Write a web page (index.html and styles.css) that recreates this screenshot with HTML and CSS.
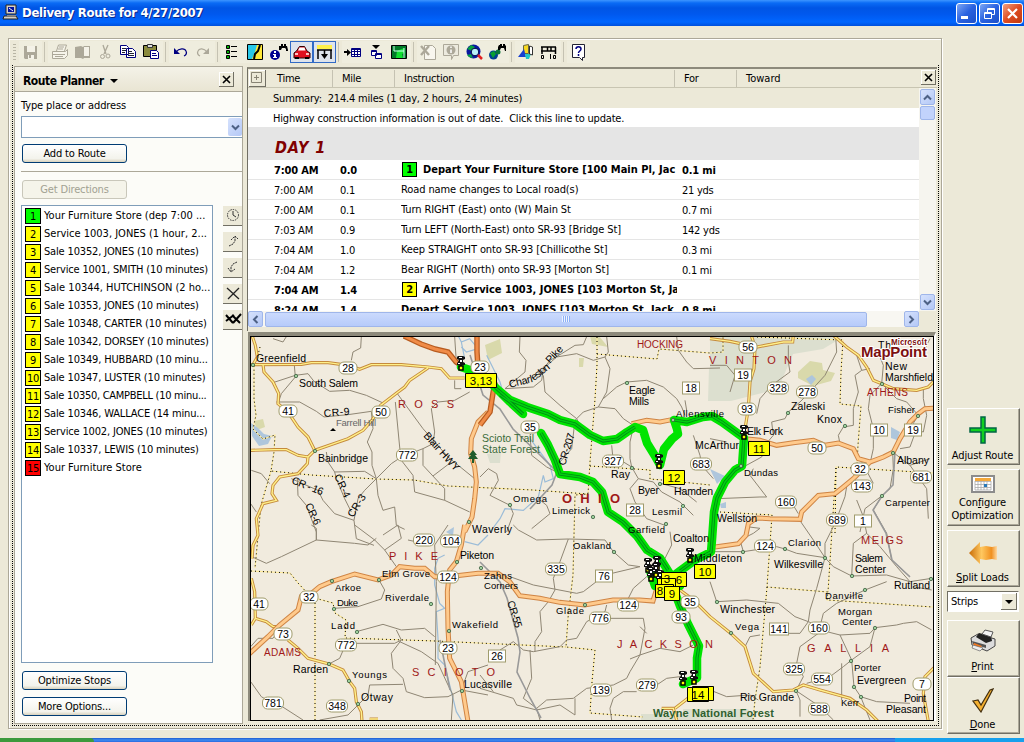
FILE: index.html
```html
<!DOCTYPE html>
<html lang="en">
<head>
<meta charset="utf-8">
<title>Delivery Route for 4/27/2007</title>
<link rel="stylesheet" href="styles.css">
</head>
<body>
<header class="titlebar">
  <svg class="app-icon" viewBox="0 0 17 17"><path fill="#d4d0c8" stroke="#222" d="M4 1h10v9H4zM2 12h12l2 3H1z"/><path fill="#0010a0" d="M6 3h6v5H6z"/><path stroke="#fff" d="M7 4l4 3"/><path fill="#888" d="M5 11h9v1H5z"/></svg>
  <h1>Delivery Route for 4/27/2007</h1>
  <div class="win-buttons">
    <span class="wb"><svg viewBox="0 0 19 19"><path fill="#fff" d="M4 12h7v3H4z"/></svg></span>
    <span class="wb"><svg viewBox="0 0 19 19"><path fill="none" stroke="#fff" d="M7.500 8V4.500h7v6H12M7 5.500h8M4.500 8.500h7v6h-7zM4 9.500h8"/></svg></span>
    <span class="wb close"><svg viewBox="0 0 19 19"><path stroke="#fff" stroke-width="2.200" d="M5 5l9 9M14 5l-9 9"/></svg></span>
  </div>
</header>

<div class="workspace">
<main class="frame">
  <div class="toolbar">
    <i class="grip"></i>
    <span class="tb"><svg viewBox="0 0 23 22"><path fill="#aca899" d="M5 5h13v13H6l-1-1z"/><path fill="#f4f2e8" d="M8 5h8v6H8zM9 14h6v4H9z"/><path fill="#aca899" d="M10 14h2v3h-2z"/></svg></span>
    <i class="sep"></i>
    <span class="tb"><svg viewBox="0 0 23 22"><path fill="#f6f4ea" stroke="#aca899" d="M8.500 10l2-6h8l-2 6M4.500 10.500h13l2-2v6l-3 3h-12z"/><path stroke="#aca899" d="M11 6h5M10 8h5M5 13.500h12M7 15.500h8"/></svg></span>
    <span class="tb"><svg viewBox="0 0 23 22"><path fill="#aca899" d="M4 6l6-1 2 1 1-1h6v12h-6l-1 1-2-1H4z"/><path fill="#f4f2e8" d="M13 6h5v9h-5z"/><path stroke="#aca899" d="M12 6v11"/></svg></span>
    <span class="tb"><svg viewBox="0 0 23 22"><path fill="none" stroke="#aca899" stroke-width="1.300" d="M9 4l3 9M14 4l-4 9"/><circle cx="8.500" cy="15.500" r="2" fill="none" stroke="#aca899"/><circle cx="14" cy="15" r="2" fill="none" stroke="#aca899"/></svg></span>
    <span class="tb"><svg viewBox="0 0 23 22"><path fill="#fff" stroke="#000080" d="M3.500 4.500h6l2 2v7h-8zM9.500 7.500h6l3 3v6h-9z"/><path stroke="#223" d="M5 7.500h4M5 9.500h4M5 11.500h3M11 10.500h4M11 12.500h6M11 14.500h6"/></svg></span>
    <span class="tb"><svg viewBox="0 0 23 22"><path fill="#8a8a3c" stroke="#000" d="M3.500 4.500h13v11h-13z"/><path fill="#ddd" stroke="#333" d="M7.500 3.500h5v3h-5z"/><path fill="#fff" stroke="#000080" d="M10.500 9.500h6l2 2v6h-8z"/><path stroke="#000080" d="M12 12.500h4M12 14.500h5"/></svg></span>
    <i class="sep"></i>
    <span class="tb"><svg viewBox="0 0 23 22"><path fill="none" stroke="#000080" stroke-width="1.200" d="M7 11c3-4 9-4 10-1 1 2 0 4-2 5"/><path fill="#000080" d="M5 7v6h6z"/></svg></span>
    <span class="tb"><svg viewBox="0 0 23 22"><path fill="none" stroke="#aca899" stroke-width="1.200" d="M15 11c-3-4-8-4-9-1-1 2 0 4 2 5"/><path fill="#aca899" d="M17 7v6h-6z"/></svg></span>
    <i class="sep"></i>
    <span class="tb"><svg viewBox="0 0 23 22"><path fill="#00b000" stroke="#000" d="M5.500 4.500h3v3h-3zM5.500 9.500h3v3h-3zM5.500 14.500h3v3h-3z"/><path stroke="#000" d="M10 5.500h6M10 10.500h6M10 15.500h6"/></svg></span>
    <span class="tb"><svg viewBox="0 0 23 22"><path fill="#ffe838" stroke="#000" d="M3.500 3.500h15v15h-15z"/><path fill="#28c8e8" d="M4 4h9l-2 7-3 7H4z"/><path fill="none" stroke="#000" stroke-width="2" d="M16 4l-2 6-3 3-1 5"/></svg></span>
    <span class="tb"><svg viewBox="0 0 23 22"><circle cx="8" cy="14" r="5" fill="#000090"/><path fill="#fff" d="M7 10h2v2H7zM6 13h3v3h1v1H6v-1h1v-2H6z"/><path fill="#000" d="M12 5h2V3h2v2h1V3h2v2h1l1 4v1h-2V8l-1-1h-3l-1 2h-2z"/></svg></span>
    <span class="tb on"><svg viewBox="0 0 23 22"><path fill="#e01020" stroke="#300" d="M6.500 10l3-4.500h5L17 10l3 2v5H4v-5z"/><path fill="#fff" d="M9.500 6.500h5l1 3H8z"/><path fill="#ffc0c0" d="M5 12h3v2H5zM16 12h3v2h-3z"/><path fill="#000" d="M5 16h4v2H5zM15 16h4v2h-4z"/></svg></span>
    <span class="tb on"><svg viewBox="0 0 23 22"><path fill="#fff04a" d="M4 4h15v4H4z"/><path fill="none" stroke="#000" stroke-width="1.500" d="M4 9h15M5 9v9M18 9v9M11.500 9v7"/><path fill="#000" d="M8 13h7l-3.500 5z"/></svg></span>
    <i class="sep"></i>
    <span class="tb"><svg viewBox="0 0 23 22"><path fill="#000" d="M2 10h3V8l4 3.500L5 15v-3H2z"/><path fill="#fff" stroke="#000080" d="M9.500 7.500h9v8h-9zM9 8.500h10M9 10.500h10M9 13.500h10M12.500 8v7M15.500 8v7"/></svg></span>
    <span class="tb"><svg viewBox="0 0 23 22"><path fill="#000" d="M7 4h8l-4 4z"/><path fill="#fff" stroke="#000080" d="M6.500 9.500h5v5h-5zM10.500 12.500h6v5h-6z"/><path stroke="#000080" d="M6 10.500h6M10 13.500h7"/></svg></span>
    <span class="tb"><svg viewBox="0 0 23 22"><path fill="#007a28" stroke="#000" d="M3.500 4.500h15v13h-15z"/><path fill="#10e030" d="M9 10l7-3v5l-2 1 1 4H8z"/><path fill="none" stroke="#cfe" d="M6 5v5l10 0M16 7v10"/></svg></span>
    <i class="sep"></i>
    <span class="tb"><svg viewBox="0 0 23 22"><path fill="#f8f6ee" stroke="#aca899" d="M7.500 4.500h8l3 3v11h-11z"/><path stroke="#aca899" stroke-width="2.400" d="M4 5l8 9M12 5l-8 9"/></svg></span>
    <span class="tb"><svg viewBox="0 0 23 22"><path fill="#eceade" stroke="#aca899" d="M3.500 3.500h15v11h-5l-2 4v-4h-8z"/><circle cx="11" cy="9" r="4.500" fill="#aca899"/><path stroke="#fff" stroke-width="1.500" d="M11 5.500V7M11 8.500V12"/></svg></span>
    <span class="tb"><svg viewBox="0 0 23 22"><circle cx="10.500" cy="10.500" r="7" fill="#0818a0"/><path fill="#08a040" d="M4 8l4-4 4 2-3 4zM4 14l4-1 2 4-4-1z"/><circle cx="12" cy="11" r="3.800" fill="#b8f0f8" stroke="#004"/><path stroke="#e02020" stroke-width="2.500" d="M15 14l4 4"/></svg></span>
    <span class="tb"><svg viewBox="0 0 23 22"><circle cx="7.500" cy="14" r="4.500" fill="#004090"/><path fill="#08a030" d="M4 12l4-2 2 3-3 4z"/><circle cx="12" cy="11" r="2.500" fill="#087838"/><path fill="#000" d="M12 6l1-2h1V3h2v2h1V3h2v1l1 1v5h-1l-1-3h-3l-1 2h-2z"/></svg></span>
    <i class="sep"></i>
    <span class="tb"><svg viewBox="0 0 23 22"><path fill="#f8d820" stroke="#664" d="M8.500 4.500l5-1v9h-5z"/><path fill="#1840d0" d="M3 16l6-8 2 8z"/><path fill="#20c8c8" d="M10 13h6l-2 5h-3z"/><path fill="#fff" stroke="#333" d="M14.500 5l3 1v8l-3-1z"/></svg></span>
    <span class="tb"><svg viewBox="0 0 23 22"><path fill="none" stroke="#000" stroke-width="1.500" d="M3 6h15M3 10h15M4 6v7M9.500 6v4M13 6v4M17.500 6v7"/><path fill="none" stroke="#000" d="M3.500 14.500h2v3h-2zM15.500 14.500h2v3h-2zM12.500 13v5"/></svg></span>
    <i class="sep"></i>
    <span class="tb"><svg viewBox="0 0 23 22"><path fill="#fff" stroke="#223" d="M5.500 3.500h12v13h-2v3l-3-3h-7z"/><path fill="none" stroke="#000080" stroke-width="1.500" d="M9 8c0-3 5-3 5 0 0 2-2.500 2-2.500 4M11.500 13v2"/></svg></span>
  </div>

  <div class="panes">
    <aside class="planner">
      <div class="planner-head"><strong>Route Planner</strong><i class="caret"></i><span class="xbtn"><svg viewBox="0 0 9 9"><path d="M1 1l7 7M8 1L1 8"/></svg></span></div>
      <div class="planner-body">
        <label class="place-label">Type place or address</label>
        <div class="combo"><span class="drop"><svg viewBox="0 0 9 7"><path d="M1 1.500l3.500 3.500L8 1.500"/></svg></span></div>
        <button class="btn">Add to Route</button>
        <hr class="rule">
        <button class="btn off">Get Directions</button>
        <div class="stops-row">
          <ol class="stops">
            <li class="wide"><b class="num go">1</b>Your Furniture Store (dep 7:00 ...</li>
            <li class="wide"><b class="num">2</b>Service 1003, JONES (1 hour, 2...</li>
            <li><b class="num">3</b>Sale 10352, JONES (10 minutes)</li>
            <li><b class="num">4</b>Service 1001, SMITH (10 minutes)</li>
            <li class="wide"><b class="num">5</b>Sale 10344, HUTCHINSON (2 ho...</li>
            <li><b class="num">6</b>Sale 10353, JONES (10 minutes)</li>
            <li><b class="num">7</b>Sale 10348, CARTER (10 minutes)</li>
            <li><b class="num">8</b>Sale 10342, DORSEY (10 minutes)</li>
            <li><b class="num">9</b>Sale 10349, HUBBARD (10 minu...</li>
            <li><b class="num">10</b>Sale 10347, LUSTER (10 minutes)</li>
            <li class="tight"><b class="num">11</b>Sale 10350, CAMPBELL (10 minu...</li>
            <li><b class="num">12</b>Sale 10346, WALLACE (14 minu...</li>
            <li><b class="num">13</b>Service 1002, JONES (10 minutes)</li>
            <li><b class="num">14</b>Sale 10337, LEWIS (10 minutes)</li>
            <li class="wide"><b class="num end">15</b>Your Furniture Store</li>
          </ol>
          <div class="stop-tools">
            <span><svg viewBox="0 0 18 18"><circle cx="9" cy="9" r="5.500" fill="none" stroke="#333" stroke-dasharray="1.500 1"/><path stroke="#333" d="M9 5v4l3 2" fill="none"/></svg></span>
            <span><svg viewBox="0 0 18 18"><path fill="none" stroke="#333" stroke-dasharray="2 .7" d="M5 14l4-2 2-3V5M7 8l4-4 3 3"/></svg></span>
            <span><svg viewBox="0 0 18 18"><path fill="none" stroke="#333" stroke-dasharray="2 .7" d="M13 4l-4 2-2 3v4M4 10l3 4 4-3"/></svg></span>
            <span><svg viewBox="0 0 18 18"><path stroke="#222" stroke-width="1.300" d="M3 4l12 11M15 4L4 15"/></svg></span>
            <span><svg viewBox="0 0 18 18"><path stroke="#000" stroke-width="2" d="M2 5l7 8M10 5l-8 6M8 5l8 8M17 4l-8 9"/></svg></span>
          </div>
        </div>
        <button class="btn low">Optimize Stops</button>
        <button class="btn last">More Options...</button>
      </div>
    </aside>

    <section class="right">
      <div class="directions">
        <div class="dir-head">
          <span class="plus"><svg viewBox="0 0 11 11"><path fill="none" stroke="#888475" d="M.5.500h10v10H.5zM3 5.500h5M5.500 3v5"/></svg></span>
          <span class="h-time">Time</span><span class="h-mile">Mile</span><span class="h-ins">Instruction</span><span class="h-for">For</span><span class="h-tow">Toward</span>
          <span class="xbtn"><svg viewBox="0 0 9 9"><path d="M1 1l7 7M8 1L1 8"/></svg></span>
        </div>
        <div class="dir-main">
          <div class="dir-list">
            <p class="note sum">Summary:&nbsp; 214.4 miles (1 day, 2 hours, 24 minutes)</p>
            <p class="note">Highway construction information is out of date.&nbsp; Click this line to update.</p>
            <h2 class="day">DAY 1</h2>
            <div class="row stop"><span>7:00 AM</span><span>0.0</span><span class="ins"><b class="num go">1</b>Depart Your Furniture Store [100 Main Pl, Jac</span><span>0.1 mi</span></div>
            <div class="row"><span>7:00 AM</span><span>0.1</span><span class="ins">Road name changes to Local road(s)</span><span>21 yds</span></div>
            <div class="row"><span>7:00 AM</span><span>0.1</span><span class="ins">Turn RIGHT (East) onto (W) Main St</span><span>0.7 mi</span></div>
            <div class="row"><span>7:03 AM</span><span>0.9</span><span class="ins">Turn LEFT (North-East) onto SR-93 [Bridge St]</span><span>142 yds</span></div>
            <div class="row"><span>7:04 AM</span><span>1.0</span><span class="ins">Keep STRAIGHT onto SR-93 [Chillicothe St]</span><span>0.3 mi</span></div>
            <div class="row"><span>7:04 AM</span><span>1.2</span><span class="ins">Bear RIGHT (North) onto SR-93 [Morton St]</span><span>0.1 mi</span></div>
            <div class="row stop"><span>7:04 AM</span><span>1.4</span><span class="ins"><b class="num">2</b>Arrive Service 1003, JONES [103 Morton St, Ja</span><span></span></div>
            <div class="row stop"><span>8:24 AM</span><span>1.4</span><span class="ins">Depart Service 1003, JONES [103 Morton St, Jack</span><span>0.8 mi</span></div>
          </div>
          <div class="vscroll"><span class="sb"><svg viewBox="0 0 9 7"><path d="M1 5.500L4.500 2 8 5.500"/></svg></span><i class="vthumb"></i><span class="sb down"><svg viewBox="0 0 9 7"><path d="M1 1.500L4.500 5 8 1.500"/></svg></span></div>
        </div>
        <div class="hscroll"><span class="sb"><svg viewBox="0 0 7 9"><path d="M5.500 1L2 4.500 5.500 8"/></svg></span><i class="hthumb"><i class="ridges"></i></i><span class="sb hend"><svg viewBox="0 0 7 9"><path d="M1.500 1L5 4.500 1.500 8"/></svg></span></div>
      </div>

      <div class="map">
      <svg class="map-svg" viewBox="251 337 682 383">
        <defs>
          <g id="o2"><rect x="-9" y="-6" width="18" height="12" rx="5"/></g>
          <g id="o3"><rect x="-10.500" y="-6" width="21" height="12" rx="5"/></g>
          <g id="r2"><rect x="-8.500" y="-6" width="17" height="12"/></g>
          <g id="pin"><path fill="#111" d="M-3-12h5l2 1v2l-2 1v2l2 1v2h-3v1h-2v-1h-3v-2l1-1 1-2-2-1v-2z"/><path fill="#fff" d="M-2-11h3v1h-3zM-1-8h2v2h-2zM-3-5h2v1h-2z"/><path fill="#ff0" stroke="#000" stroke-width="1.500" d="M-2-2h4v4h-4z"/></g>
          <g id="hw">
            <g transform="translate(248 332) scale(.33333)"><path d="M720 240L690 270 670 320 668 365 680 405 685 450 680 500 672 555 650 600"/></g>
            <g transform="translate(480 332) scale(.33333)"><path d="M455 275L500 265 540 270 580 262"/></g>
            <g transform="translate(710 332) scale(.33333)"><path d="M105 320L150 325 200 340 250 332 310 325 345 340 385 333 430 350 445 380 480 390 520 375 550 360 570 320 600 270 625 245 645 230 680 228M480 390L430 440 400 465 375 485 325 490 300 515 275 540 270 562 180 560 140 558 115 575 108 610 85 635 15 645"/></g>
            <g transform="translate(248 525) scale(.33333)"><path d="M0 390L60 335 95 300 150 255 160 215 185 210 215 185 250 170 320 147 390 165 430 150 455 125 500 130 530 130 560 155 600 155 690 145 750 145 785 170 815 212 875 220 935 232 1010 240 1095 225 1175 225 1215 228 1225 195M650 0L640 60 625 110 605 135 598 200 600 310 605 400 640 470 660 590"/></g>
          </g>
          <g id="sec">
            <g transform="translate(248 332) scale(.33333)"><path d="M8 98L160 97 190 92 240 92 300 100 335 112 370 98 460 98 540 105 580 110 605 138 650 138M12 10L22 40 28 75 15 98M45 98L48 120 75 150 92 185 90 215 120 240 150 285 180 315 200 355 300 320 345 295 372 265 398 220 450 180 470 165 485 145 540 108M8 355L80 353 115 353 150 370 180 375 200 355M180 375L178 395 150 425 95 435 75 460 72 485 85 505 45 515 25 560 30 610 15 640 12 680"/></g>
            <g transform="translate(710 332) scale(.33333)"><path d="M0 20L60 28 140 45 220 30 248 30 250 10M125 14L135 45 132 110 120 150 115 230 105 290M370 10L410 45 445 70 470 105 490 145 515 155 550 170 620 175 655 165 675 145"/></g>
            <g transform="translate(248 525) scale(.33333)"><path d="M10 160L20 200 22 280 10 300M22 280L55 290 75 305 90 305M120 345L150 370 180 400 243 417 285 435 305 470 320 490 325 530 340 560 342 590M365 582h25"/></g>
            <g transform="translate(710 400) scale(.33333)"><path d="M-90 570L-50 600 0 650 60 698 105 740 130 820 190 875 250 870 280 855 330 870 420 895 470 930 505 965M675 800L645 830 640 880 655 965M-145 925L-110 925-100 960M-105 925L-60 890"/></g>
          </g>
        </defs>
        <rect x="250" y="336" width="684" height="385" fill="#f1ebde"/>

        <g class="land">
          <path class="park" d="M710 337h133l-20 12-30 5-15 35-47 12h-21zM709 368l11-2v35h-12zM641 714h42v-5h65l8 12H641zM487 454l14-2-1 11h-10z"/>
          <path class="wood" d="M798 372l12-11 12 2 1 7 12 3-4 8-18 5-15-8zM485 345l15-6 2 14-14 7zM590 336h9l9 11-16-3zM579 358h5l-1 9h-4zM254 421l9-2 2 8-8 3z"/>
          <path class="lake" d="M251 423l7 5 6 6 8 2-4 8-9 2-7-10zM806 379l6-4 4 4-5 6zM891 427l9 5-3 8-6-2zM710 469l15 7-8 8zM720 504l6-2v6h-5zM446 532l8-5-1 9z"/>
        </g>
        <g class="river">
          <g transform="translate(248 332) scale(.33333)"><path d="M632 14L640 30 665 20 690 50 655 60 640 45M640 30L650 80"/></g>
          <g transform="translate(480 332) scale(.33333)"><path d="M20 70L60 150 70 185 85 200 105 235M150 320L210 400 220 440 195 450 190 430 175 495 130 535 75 530 60 560 30 600"/></g>
          <g transform="translate(248 525) scale(.33333)"><path d="M720 30L690 60 650 50M590 90L570 100 560 130 560 180 575 235 590 250 565 260 570 340 570 400 590 420 605 480 625 560 640 585"/></g>
        </g>
        <path class="border-y" d="M260 347L258 355 254 362 254 399 256 415 253 429 263 439 275 435 274 452 271 471 311 475 376 479 414 480 448 486 533 490 588 494M271 471L261 505 255 568M597 337L597 365 595 399 590 462 588 494 575 495 573 575 568 618 566 647 595 650 592 682 590 713 643 717M597 354L657 359 659 349 710 353 723 352V337M590 466L650 470V479L662 480 710 485M757 337L843 340 841 372 840 404 861 406 858 445 857 465M835 533L836 467 933 473M720 512L772 515 767 587 828 592 827 600 933 607M767 587L760 667 755 700 753 720M836 468L828 592M251 571L290 573 298 583 311 597 333 603 335 613 346 620 345 638 435 641 566 647M315 603V720"/>
        <path class="border-k" d="M260 347L258 355 254 362 254 399 256 415 253 429 263 439 275 435 274 452 271 471 311 475 376 479 414 480 448 486 533 490 588 494M271 471L261 505 255 568M597 337L597 365 595 399 590 462 588 494 575 495 573 575 568 618 566 647 595 650 592 682 590 713 643 717M597 354L657 359 659 349 710 353 723 352V337M590 466L650 470V479L662 480 710 485M757 337L843 340 841 372 840 404 861 406 858 445 857 465M835 533L836 467 933 473M720 512L772 515 767 587 828 592 827 600 933 607M767 587L760 667 755 700 753 720M836 468L828 592M251 571L290 573 298 583 311 597 333 603 335 613 346 620 345 638 435 641 566 647M315 603V720"/>
        <g class="minor">
          <g transform="translate(248 332) scale(.33333)"><path d="M340 14L338 48 315 60 310 85M142 135L139 100M142 135L100 185 90 215M75 152L142 130 180 125 198 148 245 178 305 175 355 190 405 213M85 210L155 210 205 238 228 255 300 248 370 238M370 238L375 290 358 330 372 360 372 400 385 440 390 490 405 535 440 525 445 580 470 592M442 210L455 345 460 385 495 430 500 480 590 505 665 540M448 185L525 290 600 375 680 440M385 440L430 395 460 375 525 350 555 335 560 300 550 230 570 210 620 205 665 180M385 440L350 475 330 500 318 565 260 545 225 505 210 475 130 440M318 565L325 620 378 640M235 360L240 390 260 420 265 440 290 500 310 540M10 415L40 425 65 455M525 350L525 400 590 470 590 505M555 432L610 390M260 420L350 418 385 440M148 440L150 490 175 520 205 600V625M8 515L25 540M75 20L105 30 115 14M620 14L625 90M620 145V170H640"/></g>
          <g transform="translate(480 332) scale(.33333)"><path d="M120 14L118 60 138 85 135 120 75 170 160 165 185 145 190 110 210 85 245 65 285 40 310 38 320 14M190 130L195 180 240 220 290 260 300 280M190 110L230 75 290 65 340 85 375 75 385 60 380 14M375 75L390 110 380 180 355 225 310 240 285 265 275 350 240 390M355 225L405 230 430 260 460 280M370 200L410 165 440 150 500 145 550 165 590 200 605 225 615 250M615 205L620 235M590 14L595 55 620 90 640 110 720 108M460 285L450 330 450 380 455 405 475 440 520 450 545 480 600 510 640 550M475 440L450 470 465 510 500 560 555 580M395 340L398 370 455 405M150 310L155 370 200 405 230 420M0 435L25 410 50 425 55 445 30 490 90 520 100 545 80 600M175 500L200 520 210 545 155 590M640 310L660 370 665 400 700 440M690 320L740 330M545 455L600 470 650 510"/></g>
          <g transform="translate(710 332) scale(.33333)"><path d="M235 40L235 90 240 120 185 160 150 200 140 245M377 14L380 60 345 130 290 190 270 210 235 240 225 260 185 270 190 310 160 345M440 70L455 115 480 110M435 130L455 115M435 130L445 180 430 230 430 280 400 285 385 310 390 335M515 155L480 190 475 230 490 290 490 350 480 395M515 155L520 100 500 50M515 155L560 200 590 210 625 250M548 360L550 410 540 470 515 492 465 530 450 600M130 410L120 430 170 495 150 495 20 500M100 405L155 375 165 350M200 500L250 520 265 545M625 250L600 290 640 300 650 250 640 200 640 170M570 350L600 345 620 290M548 360L600 400 660 380M600 400L650 470 655 560M0 100L50 100 75 130 60 180M660 20L640 60"/></g>
          <g transform="translate(248 525) scale(.33333)"><path d="M0 90L55 115 100 95 205 45 320 55 360 60 385 40M205 45L205 10 190 0M320 0L380 45 410 75 445 125M405 30L450 0 460 40 410 75M480 45L525 55M258 250L330 245 400 222 410 195 393 165M325 320L405 298 460 315 530 310 560 335M293 358L275 400 243 417M320 355L440 355 460 345 445 315M460 345L430 385 435 430 465 460 475 500 530 518 600 515 640 495 720 510M365 480L465 478M365 480L360 510 330 540 300 570 215 585M455 350L520 380 570 415 600 480 615 510 610 585M8 470L40 515 65 530M95 540L165 585M8 365L30 340 75 340 90 320M640 495L660 440 720 420M600 0L560 60 565 170 562 420"/></g>
          <g transform="translate(480 525) scale(.33333)"><path d="M100 0L115 15 170 45 265 42 375 45 400 80 445 120 480 125M265 42L240 110 220 160 225 195 205 230 180 260 185 320 165 350 165 380M90 155L160 180 290 205 310 200 375 150 480 125M380 240L375 260 320 290 290 340 260 345 240 365 160 380 130 375 100 350 60 375M360 280L490 280 495 310 480 390 450 440 440 460 400 480 320 490 280 520 200 525 170 550 180 585M570 170L500 155 460 190 440 230M450 402L480 390 540 370 600 380 640 360M395 585L390 550 400 520 430 500 470 500M150 375L155 460 130 520 170 550M0 490L100 520 110 540 170 555 240 540 285 570 285 520M530 480L560 460 600 455M570 20L575 60 550 110M500 325L480 305M0 450L40 500"/></g>
          <g transform="translate(710 400) scale(.33333)"><path d="M0 455L100 455 90 420 130 400 150 385 110 380M100 455L200 440 225 447 260 460 345 473 370 500 425 528 530 525 600 545 665 535M270 362L310 420 345 473M345 473L345 430 375 370 405 290 410 260M345 473L320 565 300 630 295 665 330 680 340 640 380 610 465 570 530 545M0 545L20 605 110 600 205 610 255 650 295 665 270 700 215 700M105 740L120 710 150 705M330 690L390 705 425 780M390 705L480 700 495 683 480 740 425 780 400 800 360 830 290 850M425 780L432 860 452 890 480 960M495 683L560 675 580 670 620 665 665 690M325 700L270 740 260 790 280 830 258 872 270 900 270 950M258 872L330 920 370 960M395 790L395 900M452 890L500 905 600 910M0 870L50 890 120 885 145 900M440 300L460 350 470 400 430 430 425 528M515 288L490 330 530 400 545 480 600 530M470 400L510 440 560 500 600 545M452 180L490 250M610 560L665 570"/></g>
        </g>
        <path class="rail" d="M470 355L483 395 500 409 513 429 540 455 557 472 552 485 530 509M480 562L500 582 507 598 518 638 520 652 517 672 530 698 541 718M895 452L893 485 882 496 873 510 886 533 892 560 910 577M440 640L450 690"/>

        <use href="#sec" class="sec-case"/><use href="#sec" class="sec-fill"/>
        <use href="#hw" class="hw-case"/><use href="#hw" class="hw-fill"/>
        <path class="us-case" d="M404 336L421 344 435 349 448 352 456 362 462 366M477 336V352L478 368M495 382L493 393 490 412 480 425"/>
        <path class="us-fill" d="M404 336L421 344 435 349 448 352 456 362 462 366M477 336V352L478 368M495 382L493 393 490 412 480 425"/>

        <path class="route" d="M461 367L470 370 490 382 497 389 510 400 527 407 548 414 560 420 575 424 590 435 603 441 617 439 627 432 635 427 643 430 647 443 655 456 660 465 664 449 672 439 678 434 677 429 674 420 687 422 703 417 712 416 722 422 744 438 742 466 735 470 725 482 717 498 714 512 712 540 711 552 695 560 680 571 672 577M497 389L510 402 523 414M541 433L548 445 555 460 560 474 580 477 593 482 602 492 608 512 623 522 637 536 647 550 660 558 670 574 674 590 680 606 688 624 699 646 697 658 697 678 683 684M650 571L655 586 680 586"/>
        <path class="route-road" d="M490 382L497 389 510 400 527 407 548 414 560 420 575 424 590 435 603 441 617 439 627 432 635 427M674 420L687 422 703 417 712 416 722 422 744 438 742 466 735 470 725 482 717 498 714 512 712 540 711 552 695 560 680 571M500 395L510 402 523 414M541 433L548 445 555 460 560 474 580 477 593 482 602 492 608 512 623 522 637 536 647 550 660 558 668 570M676 596L680 606 688 624 699 646 697 658 697 676"/>
        <path class="route-core" d="M490 382L497 389 510 400 527 407 548 414 560 420 575 424 590 435 603 441 617 439 627 432 635 427M674 420L687 422 703 417 712 416 722 422 744 438 742 466 735 470 725 482 717 498 714 512 712 540 711 552 695 560 680 571M500 395L510 402 523 414M541 433L548 445 555 460 560 474 580 477 593 482 602 492 608 512 623 522 637 536 647 550 660 558 668 570M676 596L680 606 688 624 699 646 697 658 697 676"/>

        <g class="towns"><circle cx="253" cy="365" r="1.700"/><circle cx="296" cy="376" r="1.700"/><circle cx="315" cy="451" r="1.700"/><circle cx="469" cy="522" r="1.700"/><circle cx="627" cy="383" r="1.700"/><circle cx="632" cy="468" r="1.700"/><circle cx="660" cy="484" r="1.700"/><circle cx="510" cy="505" r="1.700"/><circle cx="593" cy="517" r="1.700"/><circle cx="683" cy="506" r="1.700"/><circle cx="666" cy="524" r="1.700"/><circle cx="788" cy="413" r="1.700"/><circle cx="845" cy="426" r="1.700"/><circle cx="918" cy="416" r="1.700"/><circle cx="893" cy="453" r="1.700"/><circle cx="882" cy="384" r="1.700"/><circle cx="882" cy="496" r="1.700"/><circle cx="741" cy="466" r="1.700"/><circle cx="743" cy="552" r="1.700"/><circle cx="785" cy="549" r="1.700"/><circle cx="825" cy="558" r="1.700"/><circle cx="852" cy="576" r="1.700"/><circle cx="931" cy="579" r="1.700"/><circle cx="865" cy="590" r="1.700"/><circle cx="875" cy="628" r="1.700"/><circle cx="851" cy="661" r="1.700"/><circle cx="854" cy="687" r="1.700"/><circle cx="861" cy="697" r="1.700"/><circle cx="796" cy="691" r="1.700"/><circle cx="731" cy="633" r="1.700"/><circle cx="717" cy="602" r="1.700"/><circle cx="332" cy="581" r="1.700"/><circle cx="379" cy="580" r="1.700"/><circle cx="334" cy="609" r="1.700"/><circle cx="357" cy="632" r="1.700"/><circle cx="431" cy="604" r="1.700"/><circle cx="449" cy="631" r="1.700"/><circle cx="457" cy="562" r="1.700"/><circle cx="481" cy="568" r="1.700"/><circle cx="329" cy="664" r="1.700"/><circle cx="349" cy="681" r="1.700"/><circle cx="358" cy="704" r="1.700"/><circle cx="462" cy="691" r="1.700"/><circle cx="614" cy="552" r="1.700"/><circle cx="585" cy="605" r="1.700"/><circle cx="673" cy="420" r="1.700"/></g>
        <path fill="#1f5c2c" d="M473 450l4 5h-2l3 4h-4v4h-2v-4h-4l3-4h-2z"/><path d="M333 428l3 3h-6z"/>

        <g class="shield">
          <use href="#o2" x="480" y="367"/><use href="#o2" x="348" y="368"/><use href="#o2" x="288" y="411"/><use href="#o2" x="381" y="412"/><use href="#o3" x="407" y="455"/><use href="#o2" x="530" y="427"/><use href="#o3" x="613" y="461"/><use href="#o3" x="701" y="464"/><use href="#o2" x="748" y="347"/><use href="#o3" x="778" y="388"/><use href="#o3" x="807" y="392"/><use href="#o2" x="747" y="409"/><use href="#o2" x="817" y="448"/><use href="#o2" x="860" y="469"/><use href="#o3" x="862" y="486"/><use href="#o3" x="921" y="477"/><use href="#o3" x="786" y="502"/><use href="#o3" x="837" y="520"/><use href="#o3" x="424" y="540"/><use href="#o3" x="451" y="541"/><use href="#o3" x="448" y="577"/><use href="#o2" x="309" y="597"/><use href="#o2" x="259" y="604"/><use href="#o2" x="283" y="634"/><use href="#o3" x="346" y="645"/><use href="#o2" x="448" y="648"/><use href="#o3" x="273" y="703"/><use href="#o3" x="337" y="706"/><use href="#o3" x="556" y="569"/><use href="#o3" x="628" y="605"/><use href="#o3" x="600" y="618"/><use href="#o2" x="681" y="617"/><use href="#o2" x="690" y="602"/><use href="#o3" x="601" y="690"/><use href="#o3" x="647" y="685"/><use href="#o3" x="765" y="546"/><use href="#o3" x="819" y="628"/><use href="#o3" x="794" y="669"/><use href="#o3" x="822" y="679"/><use href="#o3" x="819" y="709"/><use href="#o2" x="922" y="684"/>
          <use href="#r2" x="691" y="388"/><use href="#r2" x="743" y="375"/><use href="#r2" x="879" y="430"/><use href="#r2" x="913" y="430"/><use href="#r2" x="635" y="510"/><use href="#r2" x="863" y="521"/><use href="#r2" x="604" y="576"/><use href="#r2" x="497" y="656"/><rect x="769.500" y="623" width="19" height="12"/>
        </g>
        <g class="shield-t">
          <text x="480" y="371">23</text><text x="348" y="372">28</text><text x="288" y="415">41</text><text x="381" y="416">50</text><text x="407" y="459">772</text><text x="530" y="431">35</text><text x="613" y="465">327</text><text x="701" y="468">683</text><text x="748" y="351">56</text><text x="778" y="392">328</text><text x="807" y="396">278</text><text x="747" y="413">93</text><text x="817" y="452">50</text><text x="860" y="473">32</text><text x="862" y="490">143</text><text x="921" y="481">681</text><text x="786" y="506">160</text><text x="837" y="524">689</text><text x="424" y="544">220</text><text x="451" y="545">104</text><text x="448" y="581">124</text><text x="309" y="601">32</text><text x="259" y="608">41</text><text x="283" y="638">73</text><text x="346" y="649">772</text><text x="448" y="652">23</text><text x="273" y="707">781</text><text x="337" y="710">348</text><text x="556" y="573">335</text><text x="628" y="609">124</text><text x="600" y="622">776</text><text x="681" y="621">93</text><text x="690" y="606">35</text><text x="601" y="694">139</text><text x="647" y="689">279</text><text x="765" y="550">124</text><text x="819" y="632">160</text><text x="794" y="673">325</text><text x="822" y="683">554</text><text x="819" y="713">588</text><text x="922" y="688">7</text>
          <text x="691" y="392">18</text><text x="743" y="379">19</text><text x="879" y="434">10</text><text x="913" y="434">19</text><text x="635" y="514">28</text><text x="863" y="525">1</text><text x="604" y="580">76</text><text x="497" y="660">26</text><text x="779" y="633">141</text>
        </g>
        <g class="county">
          <text x="398" y="408" textLength="56">ROSS</text><text class="nar" x="637" y="348" textLength="46">HOCKING</text><text x="709" y="364" textLength="83">VINTON</text><text class="nar" x="867" y="396" textLength="41">ATHENS</text><text x="389" y="560" textLength="49">PIKE</text><text class="nar" x="264" y="656" textLength="37">ADAMS</text><text x="412" y="676" textLength="83">SCIOTO</text><text x="617" y="648" textLength="96">JACKSON</text><text x="807" y="652" textLength="82">GALLIA</text><text x="861" y="544" textLength="42">MEIGS</text>
          <text class="state" x="562" y="503" textLength="58">OHIO</text>
        </g>
        <g class="lbl">
          <text x="256" y="362" textLength="50">Greenfield</text><text x="299" y="387" textLength="59">South Salem</text><text x="318" y="462" textLength="50">Bainbridge</text><text x="629" y="394" textLength="26">Eagle</text><text x="629" y="405" textLength="20">Mills</text><text x="695" y="449" textLength="44">McArthur</text><text x="611" y="478" textLength="19">Ray</text><text x="638" y="494" textLength="21">Byer</text><text x="674" y="495" textLength="39">Hamden</text><text x="747" y="435" textLength="36">Elk Fork</text><text x="717" y="522" textLength="40">Wellston</text><text x="791" y="410" textLength="34">Zaleski</text><text x="817" y="423" textLength="25">Knox</text><text x="897" y="464" textLength="32">Albany</text><text x="885" y="370" textLength="22">New</text><text x="885" y="381" textLength="48">Marshfield</text><text x="878" y="349" textLength="13">Th</text><text x="472" y="533" textLength="40">Waverly</text><text x="460" y="559" textLength="34">Piketon</text><text x="293" y="673" textLength="35">Rarden</text><text x="361" y="701" textLength="32">Otway</text><text x="464" y="688" textLength="48">Lucasville</text><text x="673" y="542" textLength="36">Coalton</text><text x="694" y="562" textLength="48">Middleton</text><text x="720" y="613" textLength="55">Winchester</text><text x="774" y="568" textLength="49">Wilkesville</text><text x="855" y="562" textLength="28">Salem</text><text x="855" y="573" textLength="31">Center</text><text x="894" y="589" textLength="36">Rutland</text><text x="857" y="684" textLength="49">Evergreen</text><text x="740" y="701" textLength="54">Rio Grande</text><text x="904" y="702" textLength="22">Point</text><text x="886" y="713" textLength="40">Pleasant</text>
        </g>
        <g class="lbl sm">
          <text x="676" y="417" textLength="48">Allensville</text><text x="513" y="502" textLength="34">Omega</text><text x="552" y="514" textLength="38">Limerick</text><text x="652" y="515" textLength="30">Lesmil</text><text x="628" y="533" textLength="37">Garfield</text><text x="744" y="476" textLength="34">Dundas</text><text x="888" y="413" textLength="27">Fisher</text><text x="885" y="506" textLength="45">Carpenter</text><text x="484" y="579" textLength="28">Zahns</text><text x="484" y="589" textLength="34">Corners</text><text x="382" y="577" textLength="48">Elm Grove</text><text x="335" y="591" textLength="26">Arkoe</text><text x="337" y="606" textLength="21">Duke</text><text x="385" y="601" textLength="44">Riverdale</text><text x="331" y="629" textLength="24">Ladd</text><text x="352" y="678" textLength="35">Youngs</text><text x="452" y="628" textLength="46">Wakefield</text><text x="573" y="549" textLength="38">Oakland</text><text x="556" y="614" textLength="28">Glade</text><text x="735" y="630" textLength="24">Vega</text><text x="788" y="546" textLength="33">Clarion</text><text x="825" y="599" textLength="38">Danville</text><text x="838" y="615" textLength="34">Morgan</text><text x="842" y="625" textLength="30">Center</text><text x="854" y="671" textLength="27">Porter</text><text x="841" y="706" textLength="18">Kerr</text>
        </g>
        <g class="lbl">
          <text transform="translate(423 436) rotate(48)" textLength="48">Blair HWY</text><text transform="translate(510 388) rotate(-15)" textLength="24">Charl</text><text transform="translate(534 381) rotate(-38)" textLength="21">eston</text><text transform="translate(550 364) rotate(-47)" textLength="20">Pike</text><text transform="translate(565 466) rotate(-73)" textLength="33">CR-207</text><text transform="translate(291 483) rotate(22)" textLength="33">CR - 16</text><text transform="translate(334 476) rotate(65)" textLength="25">CR-4</text><text transform="translate(353 518) rotate(-58)" textLength="25">CR-3</text><text transform="translate(305 505) rotate(65)" textLength="23">CR-6</text><text transform="translate(324 417) rotate(-5)" textLength="26">CR-9</text><text transform="translate(507 602) rotate(72)" textLength="28">CR-55</text>
        </g>
        <g class="lbl forest"><text x="482" y="442" textLength="52">Scioto Trail</text><text x="482" y="453" textLength="58">State Forest</text></g>
        <text class="lbl hill" x="336" y="426" textLength="40">Farrell Hill</text>
        <text class="wayne" x="653" y="717" textLength="121">Wayne National Forest</text>

        <use href="#pin" x="461" y="368"/><use href="#pin" x="659" y="466"/><use href="#pin" x="744" y="437"/><use href="#pin" x="690" y="560"/><use href="#pin" x="648" y="570"/><use href="#pin" x="657" y="568"/><use href="#pin" x="651" y="579"/><use href="#pin" x="656" y="575"/><use href="#pin" x="660" y="582"/><use href="#pin" x="683" y="683"/><use href="#pin" x="694" y="682"/>
        <g class="flag"><path d="M465.500 373.500h31v14h-31zM663.500 470.500h21v14h-21zM748.500 441.500h21v14h-21zM694.500 564.500h21v14h-21z"/><path d="M661.500 572.500h25v14h-25zM657.500 578.500h18v8h-18z"/><path d="M655.500 584.500h18v13h-18z"/><path d="M664.500 586.500h15v14h-15zM692.500 686.500h21v14h-21zM687.500 687.500h21v14h-21z"/></g>
        <g class="flag-t"><text x="481" y="385">3,13</text><text x="674" y="482">12</text><text x="759" y="453">11</text><text x="705" y="576">10</text><text x="667" y="583">3</text><text x="679" y="584">6</text><text x="660" y="595">8</text><text x="672" y="598">9</text><text x="698" y="699">14</text></g>
        <text class="ms" x="891" y="345" textLength="36">Microsoft</text>
        <text class="mp" x="861" y="357" textLength="66">MapPoint</text>
      </svg>
      </div>
    </section>
  </div>
</main>

<nav class="actions">
  <button class="act"><svg class="ic" viewBox="0 0 28 28"><path fill="#10d020" stroke="#064" stroke-width="1.500" d="M12 1h4v11h11v4H16v11h-4V16H1v-4h11z"/></svg><span>Adjust Route</span></button>
  <button class="act conf"><svg class="ic cal" viewBox="0 0 24 18"><path fill="#fff" stroke="#8c8c8c" stroke-width="2" d="M1 1h22v16H1z"/><path fill="#f4a838" d="M4 3h16v3H4z"/><path fill="none" stroke="#aaa" stroke-width=".8" d="M4 6.500h16M4 9.500h16M4 12.500h16M4 15h16M4 6v9M7 6v9M10 6v9M13 6v9M16 6v9M20 6v9"/><path fill="#2878b8" d="M13 9h3v3h-3z"/></svg><span>Con<u>f</u>igure<br>Optimization</span></button>
  <button class="act split"><svg class="ic" viewBox="0 0 30 24"><defs><linearGradient id="og"><stop offset="0" stop-color="#c86c08"/><stop offset=".45" stop-color="#ffc860"/><stop offset=".8" stop-color="#f09020"/><stop offset="1" stop-color="#ffd8a0"/></linearGradient></defs><path fill="url(#og)" d="M1 12L12 1v5l6-1 6 1 5-1v14l-5-1-6 1-6-1v5z"/></svg><span><u>S</u>plit Loads</span></button>
  <div class="select"><span>Strips</span><i><b></b></i></div>
  <button class="act print"><svg class="ic" viewBox="0 0 26 24"><path fill="#dcdcdc" stroke="#444" d="M1 9l7-4 17 5v7l-8 5L2 16z"/><path fill="#222" d="M6 8l3-4 12 3 1 5-6 2z"/><path fill="#f4f4f4" stroke="#555" d="M12 5l3-4 8 2-2 5z"/><path fill="#555" d="M2 12l14 4v3L3 15z"/><path fill="#f07820" d="M4 14l8 3-2 2-7-3z"/><path fill="#eee" stroke="#666" stroke-width=".7" d="M3 16l10 3-3 3-8-3z"/></svg><span><u>P</u>rint</span></button>
  <button class="act done"><svg class="ic" viewBox="0 0 22 25"><path fill="#f4b030" stroke="#443010" stroke-width="1.200" d="M1 13l5-1 3 5L18 2l3-1L9 24z"/></svg><span><u>D</u>one</span></button>
</nav>
</div>
<footer class="taskbar"><i class="start"></i><i class="tray"></i></footer>
</body>
</html>
```
FILE: styles.css
```css
* { box-sizing: border-box; }
body { margin: 0; width: 1024px; height: 742px; overflow: hidden; display: flex; flex-direction: column; background: #ece9d8; color: #000; font: 11px/14px "DejaVu Sans Condensed", "DejaVu Sans", sans-serif; font-stretch: condensed; letter-spacing: -.25px; }
h1, h2, p, ol { margin: 0; padding: 0; }
button { font: inherit; letter-spacing: inherit; color: inherit; padding: 0; }
i { display: block; flex: none; }
svg { display: block; flex: none; }

.titlebar { height: 26px; flex: none; display: flex; align-items: center; padding: 0 1px 0 2px; background: linear-gradient(#3d95ff 0, #0a6bf5 3px, #0055e5 8px, #0058ee 14px, #0066ff 22px, #0050dc 26px); }
.app-icon { width: 17px; height: 17px; margin-bottom: 2px; }
.titlebar h1 { margin-left: 3px; font-size: 13px; line-height: 20px; color: #fff; letter-spacing: -.32px; text-shadow: 1px 1px #0a2a8c; }
.win-buttons { display: flex; gap: 2px; margin-left: auto; }
.wb { width: 21px; height: 21px; border: 1px solid #fff; border-radius: 3px; background: linear-gradient(135deg, #7da7f5, #2a62e0 50%, #1c4fc8); }
.wb svg { width: 19px; height: 19px; }
.wb.close { background: linear-gradient(135deg, #f0a080, #de4c22 50%, #c03a10); }

.workspace { flex: none; height: 712px; display: flex; align-items: flex-start; padding: 12px 0 0 8px; }
.frame { width: 934px; height: 691px; border: 1px solid #aca899; box-shadow: inset 1px 1px #fff, 1px 1px #fff; display: flex; flex-direction: column; }
.toolbar { height: 26px; flex: none; display: flex; align-items: center; padding-left: 4px; }
.grip { width: 3px; height: 16px; margin-right: 3px; background: repeating-linear-gradient(#b8b5a4 0 1px, transparent 1px 3px); }
.tb { width: 23px; height: 22px; background: #efedde; flex: none; }
.tb svg { width: 23px; height: 22px; }
.tb.on { background: #dde3ec; box-shadow: inset 0 0 0 1px #316ac5; }
.sep { width: 6px; height: 20px; background: linear-gradient(90deg, transparent 2px, #c5c2b2 2px 3px, transparent 3px); }
.panes { flex: 1; display: flex; margin: 0 2px 2px 3px; border: 1px dotted #000; border-top: 0; padding: 1px 1px 0; }

.planner { width: 229px; height: 658px; flex: none; border: 1px solid #aca899; background: #fcfcf8; display: flex; flex-direction: column; }
.planner-head { height: 25px; flex: none; display: flex; align-items: center; padding: 4px 8px 0 8px; background: linear-gradient(#f4f2e8, #e9e5d3); border-bottom: 1px solid #aca899; font-size: 12px; letter-spacing: -.45px; }
.caret { margin-left: 6px; border: 4px solid transparent; border-top-color: #000; border-bottom: 0; }
.xbtn { width: 15px; height: 15px; margin: 0 0 4px auto; padding: 3px; background: #ece9d8; box-shadow: inset -1px -1px #716f64, inset 1px 1px #fff; }
.xbtn svg { width: 9px; height: 9px; fill: none; stroke: #000; stroke-width: 1.6; }
.planner-body { padding: 7px 0 0 6px; display: flex; flex-direction: column; }
.place-label { height: 17px; letter-spacing: -.12px; }
.combo { height: 22px; border: 1px solid #7f9db9; border-right: 0; background: #fff; display: flex; justify-content: flex-end; padding: 1px 0; }
.drop, .sb { border-radius: 2px; background: linear-gradient(135deg, #d6e2fd, #b4c8f6); display: flex; align-items: center; justify-content: center; }
.drop { width: 14px; }
.drop svg { width: 9px; height: 7px; fill: none; stroke: #4d6185; stroke-width: 2; }
.btn { width: 105px; height: 19px; margin: 6px 0 0 1px; padding-top: 1px; border: 1px solid #003c74; border-radius: 3px; background: linear-gradient(#fff, #f3f3ec 80%, #d8d2bd); line-height: 16px; text-align: center; letter-spacing: -.15px; }
.btn.off { margin-top: 8px; border-color: #c9c7ba; background: #f5f4ea; color: #a1a192; }
.rule { height: 1px; width: 100%; margin: 8px 0 0; border: 0; background: #aca899; }
.stops-row { display: flex; margin-top: 6px; gap: 10px; }
.stops { width: 192px; height: 458px; list-style: none; border: 1px solid #7f9db9; background: #fff; padding: 1px 0 0 3px; flex: none; overflow: hidden; }
.stops li { height: 18px; display: flex; align-items: center; gap: 3px; white-space: nowrap; letter-spacing: -.16px; line-height: 16px; }
.stops li.wide { letter-spacing: 0; }
.stops li.tight { letter-spacing: -.28px; }
.num { display: block; width: 16px; height: 16px; flex: none; border: 1px solid #000; background: #ff0; line-height: 15px; text-align: center; font-weight: 400; letter-spacing: -.2px; }
.num.go { background: #0f0; }
.num.end { background: #f00; }
.stop-tools { width: 20px; display: flex; flex-direction: column; gap: 6px; padding-top: 1px; }
.stop-tools span { height: 20px; background: #ece9d8; border-bottom: 1px solid #716f64; padding-left: 1px; }
.stop-tools svg { width: 18px; height: 18px; }
.btn.low { margin-top: 8px; }
.btn.last { margin-top: 7px; }

.right { flex: 1; margin: 1px 0 0 4px; display: flex; flex-direction: column; min-width: 0; }
.directions { height: 264px; flex: none; border: solid #716f64; border-width: 2px 0 0 1px; border-top-color: #8d8a7c; display: flex; flex-direction: column; }
.dir-head { height: 19px; flex: none; display: flex; align-items: center; padding: 0 1px; border-bottom: 1px solid #c8c5b2; line-height: 17px; }
.plus { width: 17px; height: 17px; margin: 0 11px 0 0; padding: 2px; box-shadow: inset -1px -1px #716f64, inset 1px 1px #fff; }
.plus svg { width: 11px; height: 11px; }
.h-time { width: 56px; border-right: 1px solid #c5c2b2; }
.h-mile { width: 62px; padding-left: 9px; border-right: 1px solid #c5c2b2; }
.h-ins { width: 280px; padding-left: 9px; border-right: 1px solid #c5c2b2; }
.h-for { width: 62px; padding-left: 9px; border-right: 1px solid #c5c2b2; }
.h-tow { padding-left: 9px; letter-spacing: 0; }
.dir-head .xbtn { margin: 0 0 2px auto; }
.dir-main { height: 223px; flex: none; display: flex; }
.dir-list { width: 671px; overflow: hidden; background: #fff; }
.note { height: 20px; padding-left: 25px; line-height: 21px; letter-spacing: -.19px; }
.note.sum { background: #ece9d8; }
.day { height: 33px; margin-top: -1px; padding: 12px 0 0 27px; background: #e5e5e5; color: #800000; font: italic bold 16px/18px "DejaVu Sans Condensed", "DejaVu Sans", sans-serif; letter-spacing: .9px; }
.row { height: 20px; border-bottom: 1px solid #e5e5e5; display: flex; padding-left: 26px; line-height: 21px; white-space: nowrap; }
.row > span { width: 66px; flex: none; }
.row > span:nth-child(2) { width: 61px; }
.row > .ins { width: 276px; margin-right: 5px; overflow: hidden; display: flex; gap: 6px; align-items: center; letter-spacing: -.1px; }
.row.stop { font-weight: 700; letter-spacing: -.15px; }
.row.stop > .ins { letter-spacing: 0; }
.row .num { width: 15px; height: 15px; line-height: 14px; margin-left: 1px; font-weight: 700; }
.vscroll { width: 17px; background: #f6f5ef; display: flex; flex-direction: column; align-items: center; padding: 1px 0; }
.sb { width: 15px; height: 16px; border: 1px solid #9fb6ea; flex: none; }
.sb svg { width: 9px; height: 9px; fill: none; stroke: #4d6185; stroke-width: 2; }
.vthumb { width: 15px; height: 14px; margin-top: 1px; border: 1px solid #9fb6ea; border-radius: 2px; background: #c2d3fc; }
.sb.down { margin-top: auto; }
.hscroll { height: 16px; width: 671px; background: #f8f7f2; display: flex; align-items: center; gap: 2px; }
.hthumb { width: 602px; height: 15px; border: 1px solid #9fb6ea; border-radius: 2px; background: linear-gradient(#cbdafd, #b6cbfa); display: flex; align-items: center; justify-content: center; }
.ridges { width: 8px; height: 6px; background: repeating-linear-gradient(90deg, #eef4fe 0 1px, #8cb0f8 1px 2px); }
.sb.hend { margin-left: auto; }

.map { width: 688px; height: 389px; margin: 1px 0 0 1px; border: solid #8d8a7c; border-width: 4px 2px 0 2px; border-right-color: #fff; }
.map-svg { width: 684px; height: 385px; border: 1px solid #000; }
.minor path, .river path, #hw path, #sec path { vector-effect: non-scaling-stroke; }
.minor { fill: none; stroke: #8f8674; stroke-width: 1; }
.rail { fill: none; stroke: #999; stroke-width: 1.6; }
.river { fill: none; stroke: #9bbcd8; stroke-width: 1.2; }
.park { fill: #dcdfcf; }
.wood { fill: #d9d9ab; }
.lake { fill: #aec6dc; }
.border-y { fill: none; stroke: #ffeb9a; stroke-width: 1.1; }
.border-k { fill: none; stroke: #000; stroke-width: 1; stroke-dasharray: 1 3; }
.sec-case { fill: none; stroke: #c58a3c; stroke-width: 3.2; }
.sec-fill { fill: none; stroke: #fff08a; stroke-width: 1.4; }
.hw-case { fill: none; stroke: #cf8444; stroke-width: 5; }
.hw-fill { fill: none; stroke: #ffca8c; stroke-width: 3; }
.us-case { fill: none; stroke: #b85c20; stroke-width: 5.5; }
.us-fill { fill: none; stroke: #f08c48; stroke-width: 3; }
.route { fill: none; stroke: #00e400; stroke-width: 8.5; stroke-linejoin: round; stroke-linecap: round; }
.route-road { fill: none; stroke: #008a14; stroke-width: 3.2; }
.route-core { fill: none; stroke: #00d010; stroke-width: 1.5; }
.towns { fill: #9ccf9c; stroke: #3e6040; stroke-width: .8; }
.shield { fill: #fff; stroke: #a09c6c; stroke-width: 1; }
.map-svg text { font-family: "Liberation Sans", Arial, sans-serif; letter-spacing: 0; }
.shield-t { font-size: 10.5px; text-anchor: middle; }
.county { font-size: 11px; fill: #a01818; }
.county .nar { font-size: 10px; }
.county .state { font-size: 13px; font-weight: 700; }
.lbl { font-size: 10.5px; }
.lbl.sm { font-size: 9.5px; }
.forest { fill: #3a6b3a; }
.hill { font-size: 9.5px; fill: #666; }
.wayne { font-size: 11px; font-weight: 700; fill: #2f5f2f; }
.flag { fill: #ff0; stroke: #000; }
.flag-t { font-size: 11.5px; text-anchor: middle; }
.ms, .mp { font-weight: 700; fill: #7c1010; stroke: #fff; stroke-width: 2px; paint-order: stroke; }
.ms { font-size: 8.5px; }
.mp { font-size: 15px; }

.actions { width: 73px; margin: 370px 0 0 5px; display: flex; flex-direction: column; }
.act { height: 57px; margin-bottom: 4px; border: 1px solid; border-color: #fff #716f64 #716f64 #fff; box-shadow: inset -1px -1px #aca899; background: #ece9d8; display: flex; flex-direction: column; align-items: center; justify-content: flex-end; gap: 5px; padding: 0 2px 2px 0; line-height: 13px; text-align: center; letter-spacing: -.1px; }
.act .ic { width: 28px; height: 28px; }
.act .cal { width: 24px; height: 18px; }
.act.conf { gap: 3px; padding-bottom: 3px; }
.act.split { gap: 6px; }
.act.split .ic { width: 30px; height: 24px; }
.select { height: 21px; width: 72px; border: 1px solid; border-color: #716f64 #fff #fff #716f64; background: #fff; display: flex; justify-content: space-between; padding: 1px 1px 1px 3px; line-height: 18px; }
.select i { width: 16px; background: #ece9d8; box-shadow: inset -1px -1px #716f64, inset 1px 1px #fff; padding: 7px 0 0 4px; }
.select b { display: block; width: 0; border: 4px solid transparent; border-top-color: #000; border-bottom: 0; }
.act.print { margin: 8px 0 0; gap: 7px; padding-bottom: 3px; }
.act.print .ic { width: 26px; height: 24px; }
.act.done .ic { width: 22px; height: 25px; }
.taskbar { height: 4px; flex: none; display: flex; justify-content: space-between; background: linear-gradient(#1f5cd0, #3f8cf0 2px, #2a6ae0); }
.start { width: 94px; background: #3c9a3c; border-radius: 0 4px 0 0; }
.tray { width: 129px; background: #18a0ec; }
```
